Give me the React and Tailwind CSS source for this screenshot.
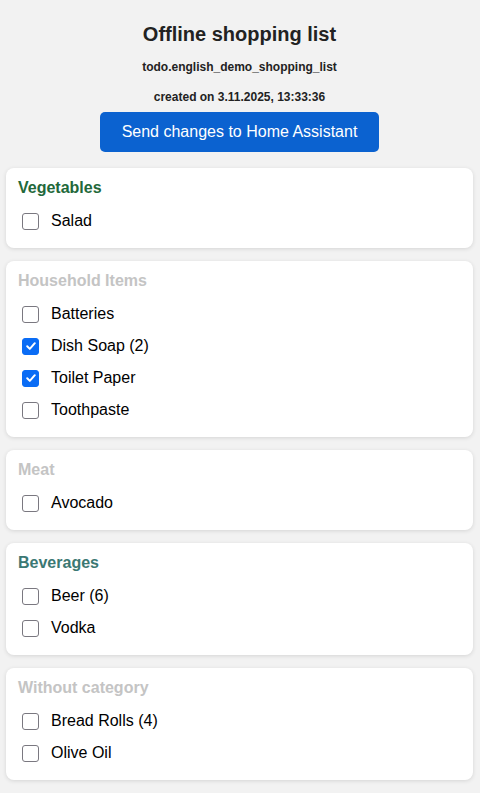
import React, { useState } from 'react';

const sections = [
  { name: 'Vegetables', color: 'text-[#22683a]', items: [{ label: 'Salad' }] },
  {
    name: 'Household Items',
    color: 'text-[#c4c4c4]',
    items: [
      { label: 'Batteries' },
      { label: 'Dish Soap (2)', done: true },
      { label: 'Toilet Paper', done: true },
      { label: 'Toothpaste' },
    ],
  },
  { name: 'Meat', color: 'text-[#c4c4c4]', items: [{ label: 'Avocado' }] },
  { name: 'Beverages', color: 'text-[#3b7873]', items: [{ label: 'Beer (6)' }, { label: 'Vodka' }] },
  {
    name: 'Without category',
    color: 'text-[#c4c4c4]',
    items: [{ label: 'Bread Rolls (4)' }, { label: 'Olive Oil' }],
  },
];

const Checkbox = ({ checked, onChange }) => (
  <button
    type="button"
    onClick={onChange}
    className={`ml-1 w-[17px] h-[17px] rounded-[3px] flex items-center justify-center shrink-0 ${
      checked ? 'bg-[#0a6cf5] border border-[#0a6cf5]' : 'bg-white border border-[#7a7880]'
    }`}
  >
    {checked && (
      <svg width="12" height="12" viewBox="0 0 12 12" fill="none">
        <path d="M2.2 6.3 4.8 8.9 9.8 3.2" stroke="white" strokeWidth="2" strokeLinecap="round" strokeLinejoin="round" />
      </svg>
    )}
  </button>
);

const Section = ({ section }) => {
  const [items, setItems] = useState(section.items);

  const toggle = (idx) => {
    setItems(items.map((it, i) => (i === idx ? { ...it, done: !it.done } : it)));
  };

  return (
    <div className="bg-white rounded-lg shadow-[0_1px_4px_rgba(0,0,0,0.12)] px-3 pt-[11px] pb-[11px]">
      <h2 className={`text-base leading-[18px] font-bold mb-2 ${section.color}`}>{section.name}</h2>
      {items.map((item, i) => (
        <label key={item.label} className="h-8 flex items-center gap-3 cursor-pointer">
          <Checkbox checked={!!item.done} onChange={() => toggle(i)} />
          <span className="text-base text-black">{item.label}</span>
        </label>
      ))}
    </div>
  );
};

export default function App() {
  return (
    <div className="min-h-[793px] bg-[#f2f2f2] pl-[6px] pr-[7px] pb-4" style={{ fontFamily: '"Liberation Sans", Arial, sans-serif' }}>
      <div className="flex flex-col items-center pt-[22px]">
        <h1 className="text-[20px] leading-6 font-bold text-[#222]">Offline shopping list</h1>
        <p className="mt-[14px] text-[12px] leading-[14px] font-bold text-[#222]">todo.english_demo_shopping_list</p>
        <p className="mt-4 text-[12px] leading-[14px] font-bold text-[#222]">created on 3.11.2025, 13:33:36</p>
        <button className="mt-2 w-[279px] h-10 rounded-[5px] bg-[#0b62d0] text-white text-base">
          Send changes to Home Assistant
        </button>
      </div>

      <div className="mt-4 flex flex-col gap-[13px]">
        {sections.map((s) => (
          <Section key={s.name} section={s} />
        ))}
      </div>
    </div>
  );
}
